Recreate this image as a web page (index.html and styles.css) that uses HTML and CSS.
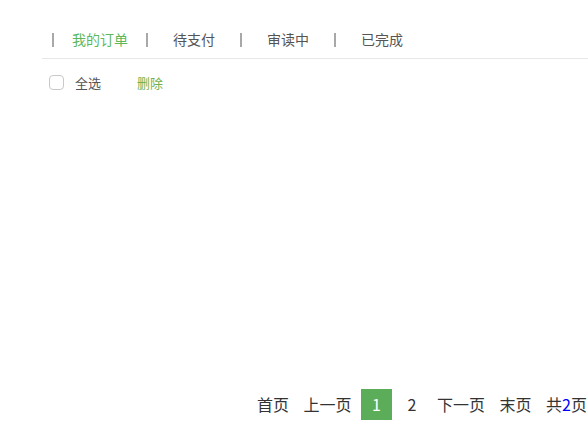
FILE: index.html
```html
<!DOCTYPE html>
<html lang="zh-CN">
<head>
<meta charset="utf-8">
<title>我的订单</title>
<link rel="stylesheet" href="styles.css">
</head>
<body>
<div class="page">
  <nav class="tabs">
    <a class="tab active">我的订单</a>
    <a class="tab">待支付</a>
    <a class="tab">审读中</a>
    <a class="tab">已完成</a>
  </nav>
  <div class="toolbar">
    <label class="check-all"><span class="checkbox"></span><span class="check-text">全选</span></label>
    <a class="delete">删除</a>
  </div>
  <div class="order-list"></div>
  <div class="pager">
    <a class="pg">首页</a>
    <a class="pg">上一页</a>
    <a class="pg num current">1</a>
    <a class="pg num">2</a>
    <a class="pg">下一页</a>
    <a class="pg">末页</a>
    <span class="pg">共<em class="total">2</em>页</span>
  </div>
</div>
</body>
</html>
```
FILE: styles.css
```css
html, body {
  margin: 0;
  padding: 0;
  background: #fff;
  overflow: hidden;
}
body {
  font-family: "Noto Sans CJK SC", "Noto Sans", sans-serif;
  color: #555;
}
.page {
  width: 588px;
  height: 433px;
  padding-left: 42px;
  box-sizing: border-box;
}
.tabs {
  display: flex;
  padding-top: 33px;
  padding-bottom: 11px;
  border-bottom: 1px solid #e8e8e8;
}
.tab {
  box-sizing: border-box;
  width: 94px;
  height: 14px;
  line-height: 13px;
  border-left: 2px solid #a8a8a8;
  text-align: center;
  font-size: 14px;
  color: #555;
}
.tab:first-child {
  margin-left: 10px;
}
.tab.active {
  color: #5cb85c;
}
.toolbar {
  display: flex;
  align-items: center;
  margin-top: 16px;
  height: 15px;
  padding-left: 7px;
  font-size: 13px;
}
.check-all {
  display: flex;
  align-items: center;
}
.checkbox {
  box-sizing: border-box;
  width: 15px;
  height: 15px;
  border: 1px solid #c8c8c8;
  border-radius: 4px;
}
.check-text {
  margin-left: 11px;
  color: #555;
}
.delete {
  margin-left: 36px;
  color: #74b04c;
}
.order-list {
  height: 299px;
}
.pager {
  display: flex;
  justify-content: flex-end;
  gap: 4.5px;
  margin-right: -4px;
  font-size: 16px;
  color: #333;
}
.pg {
  height: 31px;
  line-height: 31px;
  padding: 0 5px;
  white-space: nowrap;
}
.pg.num {
  width: 31px;
  padding: 0;
  text-align: center;
}
.pg.current {
  background: #5cad5a;
  color: #fff;
}
.total {
  font-style: normal;
  color: #0000ff;
}
```
